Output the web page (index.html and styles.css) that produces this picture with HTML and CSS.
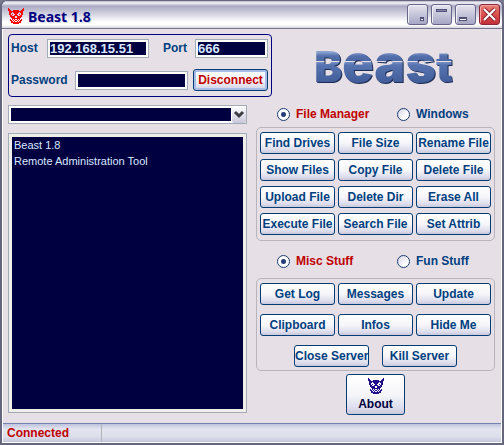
FILE: index.html
```html
<!DOCTYPE html>
<html lang="en">
<head>
<meta charset="utf-8">
<meta name="viewport" content="width=device-width, initial-scale=1">
<title>Beast 1.8</title>
<link rel="stylesheet" href="styles.css">
</head>
<body>
<svg class="defs" aria-hidden="true">
  <symbol id="skull" viewBox="0 0 16 16">
    <path fill="none" stroke="currentColor" d="M0 .5h1M15 .5h1M0 1.5h2M14 1.5h2M0 2.5h3M5 2.5h6M13 2.5h3M1 3.5h14M1 4.5h3M5 4.5h6M12 4.5h3M1 5.5h2M6 5.5h4M13 5.5h2M1 6.5h2M4 6.5h1M7 6.5h2M11 6.5h1M13 6.5h2M2 7.5h2M6 7.5h4M12 7.5h2M2 8.5h5M9 8.5h5M3 9.5h4M9 9.5h4M4 10.5h8M2 11.5h1M4 11.5h1M6 11.5h1M9 11.5h1M11 11.5h1M13 11.5h1M2 12.5h2M5 12.5h1M7 12.5h2M10 12.5h1M12 12.5h2M3 13.5h2M6 13.5h1M9 13.5h1M11 13.5h2M3 14.5h10M5 15.5h6"/>
  </symbol>
</svg>
<div class="window">
  <header class="titlebar">
    <svg class="skull"><use href="#skull"/></svg>
    <h1>Beast 1.8</h1>
    <div class="window-buttons">
      <button aria-label="Tray"><svg viewBox="0 0 19 19"><path fill="#50507a" d="M12 12h4v4h-4z"/><path fill="#fff" d="M13 14h2v1h-2z"/></svg></button>
      <button aria-label="Roll up"><svg viewBox="0 0 19 19"><path fill="#50507a" d="M4 4h11v3H4z"/><path fill="#8888a8" d="M5 5h9v1H5z"/></svg></button>
      <button aria-label="Minimize"><svg viewBox="0 0 19 19"><path fill="#50507a" d="M3 12h8v4H3z"/><path fill="#fff" d="M4 14h6v1H4z"/></svg></button>
      <button class="close" aria-label="Close"><svg viewBox="0 0 19 19"><path fill="none" stroke="#8c2638" stroke-width="4" d="M4 4l11 11M15 4L4 15"/><path fill="none" stroke="#fff" stroke-width="2" d="M4 4l11 11M15 4L4 15"/></svg></button>
    </div>
  </header>
  <main>
    <div class="top">
      <form class="connection">
        <div class="line">
          <label for="host" class="host-label">Host</label>
          <input id="host" class="host" value="192.168.15.51">
          <label for="port">Port</label>
          <input id="port" class="port" value="666">
        </div>
        <div class="line">
          <label for="password">Password</label>
          <input id="password" class="password" type="password">
          <button type="button" class="btn disconnect">Disconnect</button>
        </div>
      </form>
      <div class="logo"><span class="cap">B</span>eas<span class="cap">t</span></div>
    </div>
    <div class="columns">
      <section class="log">
        <div class="combo">
          <select aria-label="Target"><option></option></select>
          <svg class="arrow" viewBox="0 0 14 17" aria-hidden="true"><path fill="none" stroke="#3c3c44" stroke-width="3" d="M3 6l4 4 4-4"/></svg>
        </div>
        <textarea readonly aria-label="Log">Beast 1.8
Remote Administration Tool</textarea>
      </section>
      <section class="commands">
        <div class="radios">
          <label><input type="radio" name="files" checked><span>File Manager</span></label>
          <label><input type="radio" name="files"><span>Windows</span></label>
        </div>
        <div class="group files">
          <button class="btn">Find Drives</button>
          <button class="btn">File Size</button>
          <button class="btn">Rename File</button>
          <button class="btn">Show Files</button>
          <button class="btn">Copy File</button>
          <button class="btn">Delete File</button>
          <button class="btn">Upload File</button>
          <button class="btn">Delete Dir</button>
          <button class="btn">Erase All</button>
          <button class="btn">Execute File</button>
          <button class="btn">Search File</button>
          <button class="btn">Set Attrib</button>
        </div>
        <div class="radios lower">
          <label><input type="radio" name="stuff" checked><span>Misc Stuff</span></label>
          <label><input type="radio" name="stuff"><span>Fun Stuff</span></label>
        </div>
        <div class="group misc">
          <button class="btn">Get Log</button>
          <button class="btn">Messages</button>
          <button class="btn">Update</button>
          <button class="btn">Clipboard</button>
          <button class="btn">Infos</button>
          <button class="btn">Hide Me</button>
          <div class="server">
            <button class="btn">Close Server</button>
            <button class="btn">Kill Server</button>
          </div>
        </div>
        <button class="btn about"><svg class="skull"><use href="#skull"/></svg>About</button>
      </section>
    </div>
  </main>
  <footer class="status"><span>Connected</span></footer>
</div>
</body>
</html>
```
FILE: styles.css
```css
* { box-sizing: border-box; }

body {
  margin: 0;
  background: #7b7b8f;
  font: bold 12px/16px "Liberation Sans", sans-serif;
  color: #004080;
}

.defs { position: absolute; width: 0; height: 0; }

.window {
  display: flex;
  flex-direction: column;
  min-height: 100vh;
  border: 2px solid #66667f;
  border-top-width: 1px;
  border-radius: 7px 7px 0 0;
  background: #e6dfe6;
  box-shadow: inset 1px 0 #fff, inset -1px -1px #fff;
  overflow: hidden;
}

.titlebar {
  display: flex;
  align-items: center;
  gap: 4px;
  height: 28px;
  padding: 0 2px 0 6px;
  border-bottom: 1px solid #76768f;
  background: linear-gradient(#b8b8cc 0, #f4f4f8 2px, #a9a9c3 5px, #c4c4d6 10px, #fff 21px, #fff 24px, #d4d4e0 27px);
}

.skull {
  width: 16px;
  height: 16px;
  shape-rendering: crispEdges;
}
.titlebar .skull { color: #f00; margin-top: 3px; }

h1 {
  flex: 1;
  margin: 4px 0 0;
  font: bold 14px/18px "Noto Sans", sans-serif;
  color: #000080;
  text-shadow: 1px 1px #d4d4e4;
}

.window-buttons { display: flex; gap: 3px; }
.window-buttons button {
  width: 21px;
  height: 21px;
  padding: 0;
  border: 1px solid #66668a;
  border-radius: 3px;
  background: linear-gradient(#e6e6f0, #c8c8dc 45%, #a6a6c4);
  box-shadow: inset 1px 1px #f0f0f8;
}
.window-buttons svg { display: block; shape-rendering: crispEdges; }
.window-buttons .close {
  border-color: #8c2638;
  background: linear-gradient(#e88078, #d84844 60%, #c03038);
  box-shadow: inset 1px 1px #f0a0a0;
}
.window-buttons .close svg { shape-rendering: auto; }

main { flex: 1; padding: 5px 7px 0 6px; }

.top { display: flex; }
.connection {
  flex: 0 0 264px;
  display: flex;
  flex-direction: column;
  gap: 12px;
  padding: 3px 3px 6px 2px;
  border: 1px solid #000080;
  border-radius: 4px;
}
.line { display: flex; align-items: center; height: 20px; }
.line label { flex: 1; }
.line .host-label { flex: 0 0 36px; }

input:not([type="radio"]) {
  height: 19px;
  padding: 2px;
  border: 1px solid #a2acb6;
  border-radius: 0;
  background: linear-gradient(#000040, #000040) content-box, #fff;
  font: bold 13px/13px "Liberation Sans", sans-serif;
  color: #d8e8ff;
}
.host { width: 102px; margin-right: 14px; }
.port { width: 73px; }
.password { width: 113px; margin-right: 5px; }

.btn {
  min-width: 0;
  height: 22px;
  padding: 0;
  border: 1px solid #003c74;
  border-radius: 3px;
  background: linear-gradient(#fff, #f6f6fa 50%, #dcdcec 85%, #c8c8dc);
  font: bold 12px/16px "Liberation Sans", sans-serif;
  color: #004080;
  white-space: nowrap;
}
.disconnect {
  width: 75px;
  color: #c00000;
  box-shadow: inset 0 0 0 2px #a8bce8;
}

.logo {
  flex: 1;
  text-align: center;
  font: 900 52px/60px Inter, sans-serif;
  color: transparent;
  background: linear-gradient(#8ca4d0 0 18px, #5470ac 22px, #4a68a4 27px, #e6dfe6 27px 28px, #7890c4 28px, #5874b0 31px, #405c98 50px);
  background-clip: text;
  filter: drop-shadow(1px 1px #1c2c54);
}
.logo .cap { font-size: 42px; }

.columns { display: flex; gap: 9px; margin-top: 8px; }
.log, .commands { flex: 1 1 0; min-width: 0; display: flex; flex-direction: column; }

.combo { position: relative; height: 19px; }
.combo select {
  appearance: none;
  display: block;
  width: 100%;
  height: 19px;
  padding: 2px 15px 2px 2px;
  border: 1px solid #a2acb6;
  border-radius: 0;
  background: linear-gradient(#000040, #000040) content-box, #fff;
  color: #d8e8ff;
}
.arrow {
  position: absolute;
  top: 1px;
  right: 1px;
  width: 14px;
  height: 17px;
  border-radius: 2px;
  background: linear-gradient(#fff, #c8c8dc);
  pointer-events: none;
}

textarea {
  flex: 1;
  width: 100%;
  min-height: 270px;
  margin: 9px 0 2px;
  padding: 0 2px;
  border: 4px solid #f0eee8;
  outline: 1px solid #a2acb6;
  outline-offset: -1px;
  background: #000040;
  color: #d8e8ff;
  font: 11px/16px "Liberation Sans", sans-serif;
  resize: none;
}

.radios {
  display: grid;
  grid-template-columns: 120px 1fr;
  align-items: center;
  height: 18px;
  margin-bottom: 4px;
  padding-left: 21px;
}
.radios label { display: flex; align-items: center; gap: 6px; white-space: nowrap; }
.radios.lower { margin: 11px 0 8px; }
input[type="radio"] {
  appearance: none;
  width: 13px;
  height: 13px;
  margin: 0;
  border: 1px solid #1c3c70;
  border-radius: 50%;
  background: linear-gradient(135deg, #d4d4e4, #fff 70%);
}
input[type="radio"]:checked {
  background: radial-gradient(#243c78 0 2px, #fff 3px);
}
input:checked + span { color: #c00000; }

.group {
  display: grid;
  grid-template-columns: repeat(3, 1fr);
  gap: 5px 3px;
  padding: 4px 3px 5px;
  border: 1px solid #b8b4bc;
  border-radius: 5px;
}
.misc { row-gap: 9px; padding-bottom: 3px; }
.server { grid-column: 1 / -1; display: flex; justify-content: center; gap: 13px; }
.server .btn { width: 75px; }

.about {
  display: flex;
  flex-direction: column;
  align-items: center;
  justify-content: center;
  gap: 2px;
  align-self: center;
  width: 59px;
  height: 41px;
  margin-top: 3px;
  color: #000040;
}
.about .skull { color: #20108c; }

.status {
  display: flex;
  height: 19px;
  margin: 7px 1px 1px;
  border-top: 1px solid #7484b0;
  background: linear-gradient(#c0c4dc, #e2e4f0 5px, #dcdeea 13px, #c4c6de);
  color: #c00000;
  line-height: 18px;
}
.status span {
  width: 99px;
  padding-left: 4px;
  border-right: 1px solid #b4b4b8;
}
```
